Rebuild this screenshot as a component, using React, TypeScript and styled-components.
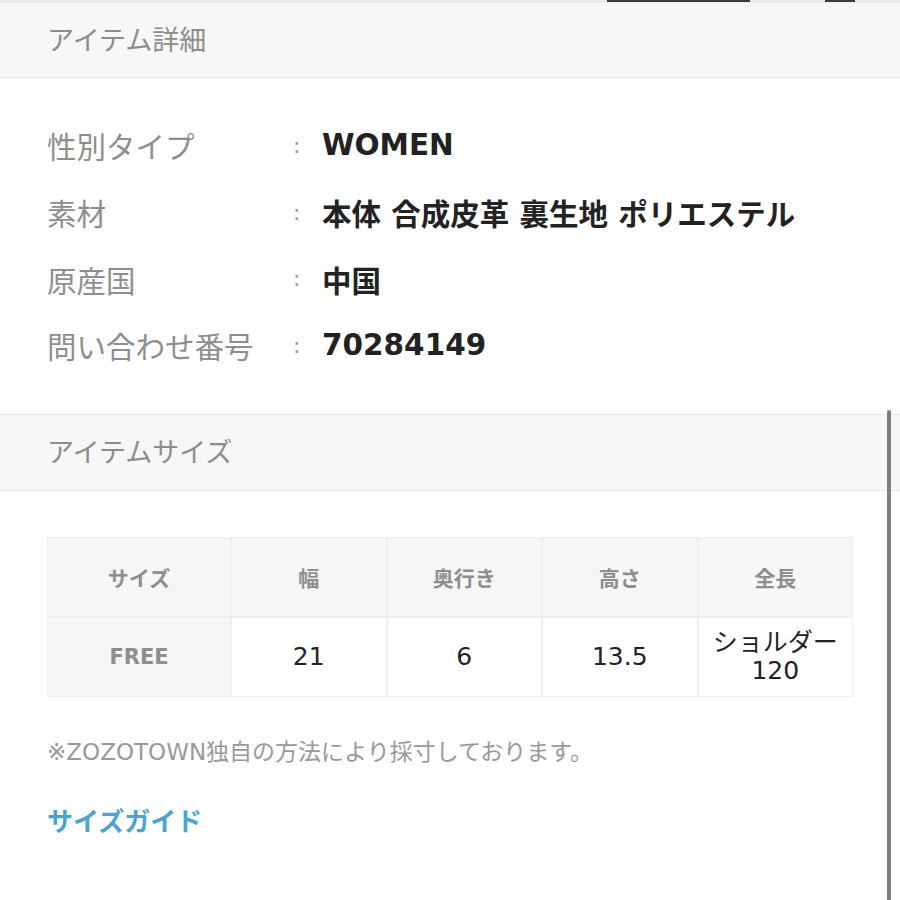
import styled, { createGlobalStyle } from "styled-components";

const GlobalStyle = createGlobalStyle`
  html, body {
    margin: 0;
    padding: 0;
    background: #ffffff;
  }
  body {
    font-family: "DejaVu Sans", "Noto Sans CJK JP", sans-serif;
    color: #222;
  }
`;

const Page = styled.div`
  width: 900px;
  min-height: 900px;
  position: relative;
  overflow: hidden;
`;

const TopEdge = styled.div`
  height: 3px;
  background: #ebebeb;
  display: flex;
`;

const EdgePiece = styled.div<{ $left: number; $width: number }>`
  margin-left: ${(p) => p.$left}px;
  width: ${(p) => p.$width}px;
  height: 2px;
  background: #3a3a3a;
`;

const SectionHeader = styled.div<{ $top?: boolean }>`
  height: ${(p) => (p.$top ? 77 : 75)}px;
  box-sizing: border-box;
  padding: 0 0 3px 47px;
  display: flex;
  align-items: center;
  background: #f7f7f7;
  border-bottom: 1px solid #e6e6e6;
  border-top: ${(p) => (p.$top ? "1px solid #e6e6e6" : "none")};
  font-size: 27px;
  color: #8c8c8c;
`;

const DetailList = styled.div`
  padding: 34px 47px 35px;
`;

const DetailRow = styled.div`
  display: grid;
  grid-template-columns: 246px 29px 1fr;
  align-items: center;
  height: 66.7px;
`;

const Label = styled.div`
  font-size: 29.5px;
  color: #8e8e8e;
`;

const Colon = styled.div`
  font-size: 22px;
  color: #9a9a9a;
`;

const Value = styled.div`
  font-size: 29.5px;
  font-weight: 700;
  color: #222;
`;

const SizeBody = styled.div`
  padding: 46px 47px 0;
`;

const SizeTable = styled.div`
  display: grid;
  grid-template-columns: 182px repeat(4, 1fr);
  grid-auto-rows: 78px;
  gap: 2px;
  padding: 1px;
  background: #efefef;
  width: 806px;
  box-sizing: border-box;
`;

const HeadCell = styled.div`
  display: flex;
  align-items: center;
  justify-content: center;
  background: #f6f6f6;
  font-size: 21px;
  font-weight: 700;
  color: #8e8e8e;
`;

const DataCell = styled.div`
  display: flex;
  align-items: center;
  justify-content: center;
  text-align: center;
  background: #ffffff;
  font-size: 25px;
  line-height: 28px;
  color: #222;
`;

const Note = styled.div`
  margin-top: 36px;
  font-size: 23px;
  color: #999;
`;

const GuideLink = styled.a`
  display: block;
  margin-top: 34px;
  font-size: 26px;
  font-weight: 700;
  color: #4ea3cc;
  text-decoration: none;
`;

const ScrollThumb = styled.div`
  position: absolute;
  right: 9px;
  top: 410px;
  width: 4px;
  height: 500px;
  border-radius: 2px;
  background: #7f7f7f;
`;

const details = [
  { label: "性別タイプ", value: "WOMEN" },
  { label: "素材", value: "本体 合成皮革 裏生地 ポリエステル" },
  { label: "原産国", value: "中国" },
  { label: "問い合わせ番号", value: "70284149" },
];

const headers = ["サイズ", "幅", "奥行き", "高さ", "全長"];

const App = () => {
  return (
    <Page>
      <GlobalStyle />
      <TopEdge>
        <EdgePiece $left={607} $width={143} />
        <EdgePiece $left={75} $width={30} />
      </TopEdge>
      <SectionHeader>アイテム詳細</SectionHeader>
      <DetailList>
        {details.map((d) => (
          <DetailRow key={d.label}>
            <Label>{d.label}</Label>
            <Colon>:</Colon>
            <Value>{d.value}</Value>
          </DetailRow>
        ))}
      </DetailList>
      <SectionHeader $top>アイテムサイズ</SectionHeader>
      <SizeBody>
        <SizeTable>
          {headers.map((h) => (
            <HeadCell key={h}>{h}</HeadCell>
          ))}
          <HeadCell>FREE</HeadCell>
          <DataCell>21</DataCell>
          <DataCell>6</DataCell>
          <DataCell>13.5</DataCell>
          <DataCell>
            ショルダー
            <br />
            120
          </DataCell>
        </SizeTable>
        <Note>※ZOZOTOWN独自の方法により採寸しております。</Note>
        <GuideLink href="#">サイズガイド</GuideLink>
      </SizeBody>
      <ScrollThumb />
    </Page>
  );
};

export default App;
